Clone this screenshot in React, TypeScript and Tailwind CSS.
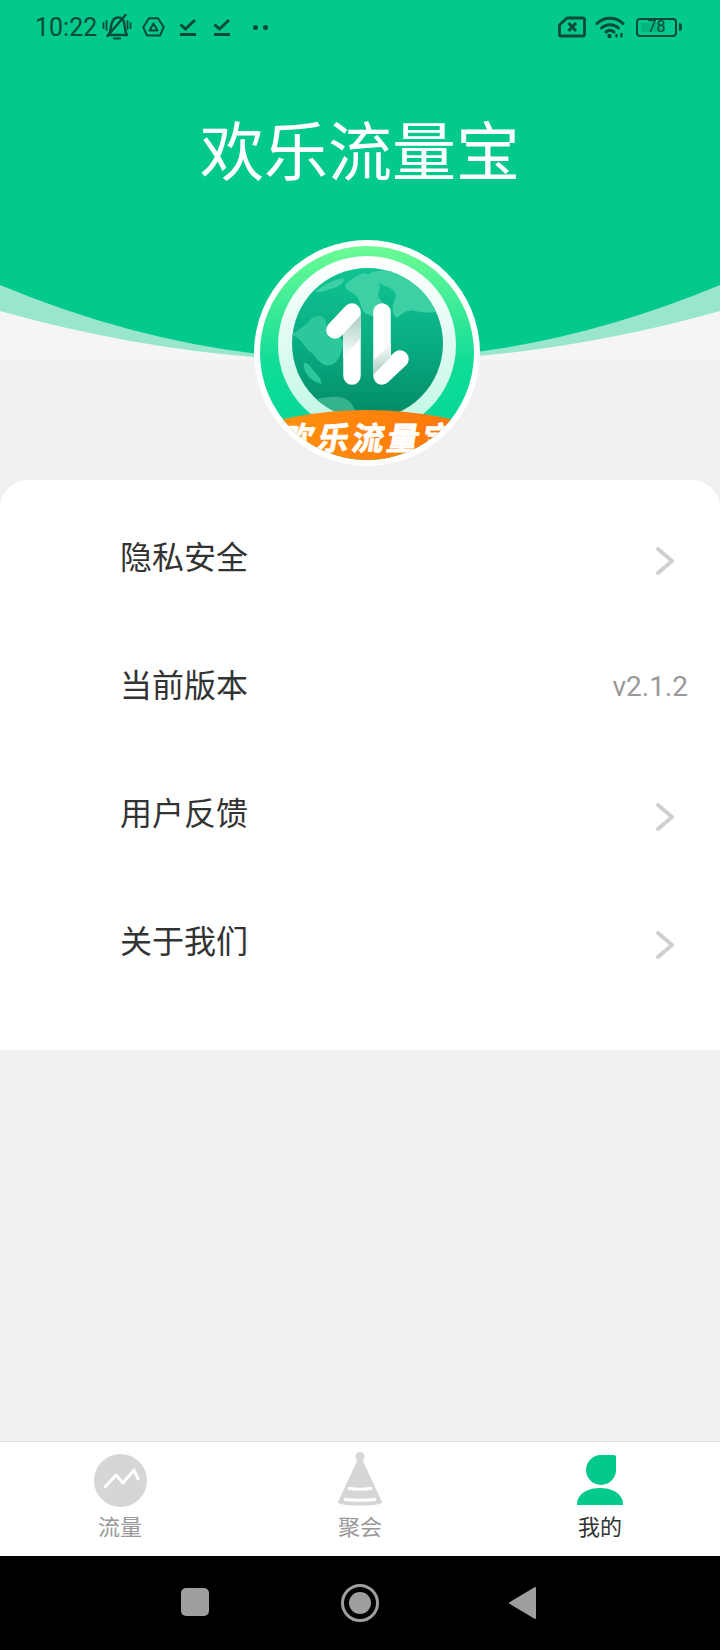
const CJK = "font-['Noto_Sans_CJK_SC','Noto_Sans',sans-serif]";

function BellOffIcon() {
  return (
    <svg width="30" height="26" viewBox="0 0 30 26" fill="none" stroke="#0b4a38" strokeWidth="2.400" strokeLinecap="round" strokeLinejoin="round">
      <path d="M6.500 21c2.500-3 2-7 3-11 1-4 3.500-6.500 6.500-6.500 4 0 6 3 6.500 6.500.5 4 .5 8 2.500 11z" />
      <path d="M12 24.500h6" strokeWidth="2.200" />
      <path d="M5.500 22 23.500 1" />
      <path d="M1.500 9v5M4.500 7v9M25.500 7v8M28.500 9v5" strokeWidth="1.800" />
    </svg>
  );
}

function TriangleBadgeIcon() {
  return (
    <svg width="23" height="20" viewBox="0 0 23 20" fill="none" stroke="#0b4a38" strokeWidth="2" strokeLinejoin="round">
      <path d="M7 1.200h9l5.800 9L18 18.500H5L1.200 10.200z" />
      <path d="M11.500 6.500 15.500 13.500H7.500z" />
    </svg>
  );
}

function DownloadDoneIcon() {
  return (
    <svg width="18" height="19" viewBox="0 0 18 19" fill="none" stroke="#0b4a38" strokeWidth="3">
      <path d="M1.500 6.500l5 4.500 9.500-9" />
      <path d="M1 16.500h16" />
    </svg>
  );
}

function SimOffIcon() {
  return (
    <svg width="28" height="22" viewBox="0 0 28 22" fill="none" stroke="#0b4a38" strokeWidth="2.800" strokeLinejoin="round">
      <path d="M9 2h16a1.500 1.500 0 0 1 1.500 1.500v15a1.500 1.500 0 0 1-1.500 1.500H3a1.500 1.500 0 0 1-1.500-1.500V9z" />
      <path d="M10.500 7l7.500 8M18 7l-7.500 8" strokeWidth="3" />
    </svg>
  );
}

function WifiIcon() {
  return (
    <svg width="30" height="23" viewBox="0 0 30 23" fill="none" stroke="#0b4a38" strokeWidth="3" strokeLinecap="round">
      <path d="M2 7.500c7-7 19-7 26 0" />
      <path d="M6.500 12c5-4.500 12-4.500 17 0" />
      <path d="M11 16c2.500-2 5.500-2 8 0" />
      <circle cx="14.500" cy="20" r="2.200" fill="#0b4a38" stroke="none" />
      <path d="M21.500 21.500v-3.500M26.500 21.500v-4.500" strokeWidth="2.200" strokeLinecap="butt" />
    </svg>
  );
}

function BatteryIcon() {
  return (
    <div className="flex items-center gap-[2px]">
      <div className="relative flex h-[19px] w-[41px] items-center justify-center rounded-[4px] border-2 border-[#0b4a38]">
        <div className="absolute left-[3px] top-[3px] bottom-[3px] w-[24px] bg-[#0b4a38]/15" />
        <span className="relative font-['Roboto',sans-serif] text-[16px] leading-none text-[#0b4a38]">78</span>
      </div>
      <div className="h-[8px] w-[3px] rounded-r-sm bg-[#0b4a38]" />
    </div>
  );
}

function StatusBar() {
  return (
    <div className="relative flex h-[54px] items-center pl-[35px] pr-[38px]">
      <span className="mt-[1px] w-[67px] font-['Roboto',sans-serif] text-[25px] leading-none text-[#0b4a38]">10:22</span>
      <BellOffIcon />
      <div className="ml-[10px]"><TriangleBadgeIcon /></div>
      <div className="ml-[14px]"><DownloadDoneIcon /></div>
      <div className="ml-[16px]"><DownloadDoneIcon /></div>
      <div className="ml-[22px] flex gap-[5px]">
        <div className="size-[5px] rounded-full bg-[#0b4a38]" />
        <div className="size-[5px] rounded-full bg-[#0b4a38]" />
      </div>
      <div className="ml-auto flex items-center">
        <SimOffIcon />
        <div className="ml-[9px]"><WifiIcon /></div>
        <div className="ml-[11px]"><BatteryIcon /></div>
      </div>
    </div>
  );
}

function Logo() {
  return (
    <svg width="226" height="226" viewBox="0 0 226 226">
      <defs>
        <linearGradient id="ring" x1="0" y1="0" x2="0" y2="1">
          <stop offset="0" stopColor="#6dfb95" />
          <stop offset="0.55" stopColor="#0fdc98" />
          <stop offset="1" stopColor="#02d496" />
        </linearGradient>
        <linearGradient id="inner" x1="0" y1="0" x2="0" y2="1">
          <stop offset="0" stopColor="#ffffff" />
          <stop offset="1" stopColor="#bdf7e5" />
        </linearGradient>
        <linearGradient id="globe" x1="0" y1="0" x2="0" y2="1">
          <stop offset="0" stopColor="#10c391" />
          <stop offset="0.5" stopColor="#09ad82" />
          <stop offset="1" stopColor="#038a66" />
        </linearGradient>
        <linearGradient id="band" x1="0" y1="0" x2="1" y2="0">
          <stop offset="0" stopColor="#ffa00e" />
          <stop offset="1" stopColor="#ff680b" />
        </linearGradient>
        <linearGradient id="foldDown" x1="0" y1="0" x2="0" y2="1">
          <stop offset="0" stopColor="#a9cdc1" />
          <stop offset="1" stopColor="#ffffff" />
        </linearGradient>
        <linearGradient id="foldUp" x1="0" y1="0" x2="0" y2="1">
          <stop offset="0" stopColor="#ffffff" />
          <stop offset="1" stopColor="#a9cdc1" />
        </linearGradient>
        <clipPath id="ringClip">
          <circle cx="113" cy="113" r="107" />
        </clipPath>
        <clipPath id="globeClip">
          <circle cx="113.500" cy="103.500" r="75.500" />
        </clipPath>
      </defs>
      <circle cx="113" cy="113" r="113" fill="#ffffff" />
      <circle cx="113" cy="113" r="107" fill="url(#ring)" />
      <circle cx="113" cy="105" r="89" fill="url(#inner)" />
      <circle cx="113.500" cy="103.500" r="75.500" fill="url(#globe)" />
      {/* continents, drawn at 3x */}
      <g clipPath="url(#globeClip)">
        <g transform="translate(26 20) scale(0.3333)">
          <path d="M105 95c25-20 55-35 85-40 5 10-10 25-30 30-20 3-30 15-55 10z" fill="#3ed0a5" />
          <path d="M195 78c10-15 30-30 55-38 25 0 45 20 50 42-5 15-12 25 5 42 15 15 8 30-5 40-10 10-30 5-45-5-15-12-12-35-25-50-10-12-30-15-35-31z" fill="#3ed0a5" />
          <path d="M265 42c30-15 70-12 110 0 50 25 90 65 105 110-25 10-55 5-80 0-20-4-35 10-50 22-15-10-15-35-5-55 8-18-5-30-22-38-25-10-45-20-58-39z" fill="#3ed0a5" />
          <path d="M35 225c20-15 45-30 60-50 15-10 35-10 42 5 3 20 5 35 25 45 25 10 35 20 25 40-10 30-15 50-45 52-25-5-35-30-55-45-15-12-20-35-52-47z" fill="#2cc79a" />
          <path d="M72 308c10 0 20 10 30 25 10 12 22 22 22 38-20-5-35-15-45-30-6-12-10-22-7-33z" fill="#2cc79a" />
          <path d="M85 440c15-20 40-30 65-28 25-5 50 0 65 20 8 12 15 25 15 35H90z" fill="#35b38e" />
        </g>
      </g>
      <g fill="none" stroke="#ffffff" strokeWidth="17.500" strokeLinecap="round" strokeLinejoin="round">
        <path d="M81 90 98 72v64" />
        <path d="M128 72v64l18-17" />
      </g>
      <path d="M107 75 89 94v24l18-20z" fill="url(#foldDown)" />
      <path d="M137 103v14l-18 18v-14z" fill="url(#foldUp)" />
      <g clipPath="url(#ringClip)">
        <ellipse cx="113" cy="260" rx="190" ry="90" fill="url(#band)" />
        <text
          x="113"
          y="210"
          textAnchor="middle"
          fill="#ffffff"
          stroke="#ffffff"
          strokeWidth="0.800"
          fontSize="32"
          fontWeight="700"
          letterSpacing="3"
          fontFamily="'Noto Sans CJK SC', sans-serif"
          transform="translate(38 0) skewX(-10)"
        >
          欢乐流量宝
        </text>
      </g>
    </svg>
  );
}

function Hero() {
  return (
    <div className="relative h-[480px] overflow-hidden">
      <svg className="absolute inset-0" width="720" height="480" viewBox="0 0 720 480">
        <rect width="720" height="360" fill="#f5f5f5" />
        <path d="M0 0H720V311Q360 412 0 311Z" fill="#99e6cc" />
        <path d="M0 0H720V285Q360 435 0 285Z" fill="#04c98d" />
      </svg>
      <div className="relative">
        <StatusBar />
        <h1 className={`${CJK} mt-[47px] text-center text-[64px] leading-[92px] font-normal text-white`}>欢乐流量宝</h1>
      </div>
      <div className="absolute left-[254px] top-[240px]">
        <Logo />
      </div>
    </div>
  );
}

function Chevron() {
  return (
    <svg className="mt-[8px] mr-[45px]" width="20" height="32" viewBox="0 0 20 32" fill="none" stroke="#d0d0d0" strokeWidth="4" strokeLinecap="round" strokeLinejoin="round">
      <path d="M3 4l14 12L3 28" />
    </svg>
  );
}

function MenuRow({ label, value }: { label: string; value?: string }) {
  return (
    <div className="flex h-[128px] items-center justify-between pl-[120px]">
      <span className={`${CJK} mb-[5px] text-[32px] leading-none text-[#333333]`}>{label}</span>
      {value ? (
        <span className="mt-[4px] mr-[32px] font-['Roboto',sans-serif] text-[28px] leading-none text-[#999999]">{value}</span>
      ) : (
        <Chevron />
      )}
    </div>
  );
}

function TrafficIcon() {
  return (
    <svg width="53" height="53" viewBox="0 0 53 53">
      <circle cx="26.500" cy="26.500" r="26.500" fill="#d6d6d6" />
      <path d="M11 33l11-12 7 8 11-13 4 9" fill="none" stroke="#ffffff" strokeWidth="3" strokeLinecap="round" strokeLinejoin="round" />
    </svg>
  );
}

function PartyIcon() {
  return (
    <svg className="mb-[3px]" width="46" height="54" viewBox="0 0 46 54">
      <circle cx="23" cy="4.500" r="4.500" fill="#d6d6d6" />
      <path d="M21 7h4l20 43c1 2-8 3.500-22 3.500S0 52 1 50z" fill="#d6d6d6" />
      <path d="M12 36.500q11 1.500 22 0M8 47.500q15 1.500 30 0" fill="none" stroke="#ffffff" strokeWidth="2.800" strokeLinecap="round" />
    </svg>
  );
}

function PersonIcon() {
  return (
    <svg width="46" height="50" viewBox="0 0 46 50">
      <path d="M24 0h13a2 2 0 0 1 2 2v13a15 15 0 1 1-15-15z" fill="#04c98d" />
      <path d="M0 50c0-2 0-5 2-8 4-6 12-9 21-9s17 3 21 9c2 3 2 6 2 8z" fill="#04c98d" />
    </svg>
  );
}

function TabItem({ icon, label, active }: { icon: React.ReactNode; label: string; active?: boolean }) {
  return (
    <div className="flex flex-1 flex-col items-center">
      <div className="flex h-[60px] items-center justify-center">{icon}</div>
      <span className={`${CJK} text-[22px] leading-[30px] ${active ? "text-[#333333]" : "text-[#999999]"}`}>{label}</span>
    </div>
  );
}

function NavButtons() {
  return (
    <div className="relative h-[94px] bg-black">
      <div className="absolute left-[181px] top-[32px] size-[28px] rounded-[5px] bg-[#9e9e9e]" />
      <div className="absolute left-[341px] top-[28px] flex size-[38px] items-center justify-center rounded-full border-[3px] border-[#9e9e9e]">
        <div className="size-[22px] rounded-full bg-[#9e9e9e]" />
      </div>
      <svg className="absolute left-[508px] top-[30px]" width="29" height="34" viewBox="0 0 29 34">
        <path d="M27 2v30L2 17z" fill="#9e9e9e" stroke="#9e9e9e" strokeWidth="2" strokeLinejoin="round" />
      </svg>
    </div>
  );
}

export default function App() {
  return (
    <div className="flex h-[1650px] w-[720px] flex-col bg-[#f1f1f1]">
      <Hero />
      <div className="rounded-t-[28px] bg-white pt-[13px] pb-[45px]">
        <MenuRow label="隐私安全" />
        <MenuRow label="当前版本" value="v2.1.2" />
        <MenuRow label="用户反馈" />
        <MenuRow label="关于我们" />
      </div>
      <div className="flex-1" />
      <div className="flex h-[115px] border-t border-[#dddddd] bg-white pt-[8px]">
        <TabItem icon={<TrafficIcon />} label="流量" />
        <TabItem icon={<PartyIcon />} label="聚会" />
        <TabItem icon={<PersonIcon />} label="我的" active />
      </div>
      <NavButtons />
    </div>
  );
}
